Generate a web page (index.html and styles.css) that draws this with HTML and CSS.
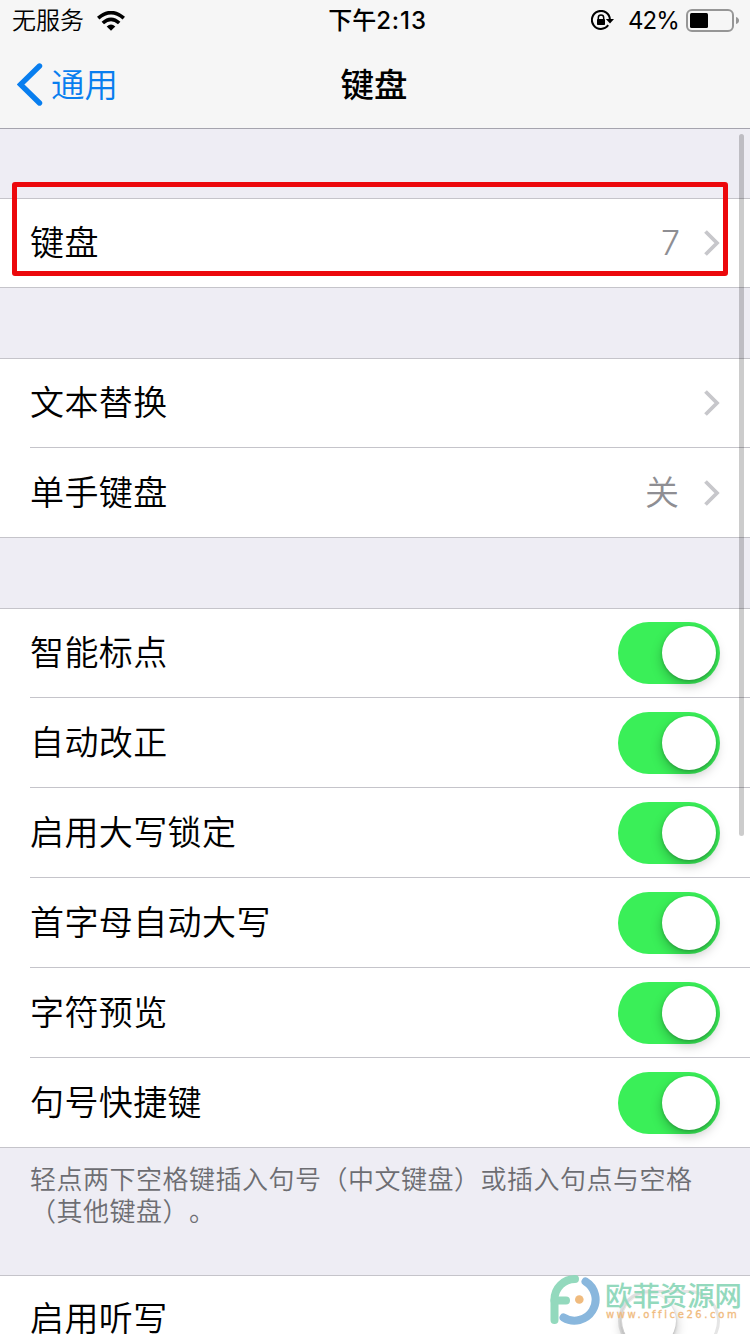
FILE: index.html
```html
<!DOCTYPE html>
<html lang="zh-CN">
<head>
<meta charset="utf-8">
<title>键盘</title>
<link rel="stylesheet" href="styles.css">
</head>
<body>
<div class="screen">
  <header class="header">
    <div class="status">
      <div class="status-left">
        <span>无服务</span>
        <svg class="wifi" width="28" height="20" viewBox="0 0 28 20"><g fill="none" stroke="#000" stroke-width="3.6"><path d="M1.2 7.2Q14-4 26.8 7.2"/><path d="M5.8 12Q14 4.6 22.2 12"/></g><path d="M9.7 15.4Q14 11.6 18.3 15.4L14 19.8Z"/></svg>
      </div>
      <div class="time">下午<span class="clock">2:13</span></div>
      <div class="status-right">
        <svg class="lock" width="23" height="22" viewBox="0 0 23 22"><path d="M17.2 15.2A9 9 0 1 1 18.9 9.500" fill="none" stroke="#000" stroke-width="2"/><path d="M14.800 9H23L19 13.6Z"/><rect x="6" y="8.900" width="8" height="6.2" rx=".8"/><path d="M7.3 9.500V7.7a2.7 2.7 0 0 1 5.4 0V9.500" fill="none" stroke="#000" stroke-width="1.5"/></svg>
        <span class="percent">42%</span>
        <svg class="battery" width="54" height="24" viewBox="0 0 54 24"><rect x="1" y="1" width="46" height="21" rx="5" fill="none" stroke="#969696" stroke-width="2"/><rect x="4" y="4" width="18" height="15" rx="1.5"/><path d="M50 8Q53 9 53 11.5T50 15Z" fill="#969696"/></svg>
      </div>
    </div>
    <nav class="nav">
      <a class="back"><svg width="26" height="43" viewBox="0 0 26 43"><path d="M22.5 3L3.5 21.5L22.5 40" fill="none" stroke="#087eef" stroke-width="5.4" stroke-linecap="round" stroke-linejoin="miter"/></svg><span class="back-text">通用</span></a>
      <h1 class="title">键盘</h1>
    </nav>
  </header>
  <main class="content">
    <section class="group">
      <div class="row"><span class="label">键盘</span><span class="value number">7</span><svg class="chevron" width="16" height="26" viewBox="0 0 16 26"><path d="M1.500 1.500L13 13L1.500 24.500"/></svg></div>
      <div class="highlight"></div>
    </section>
    <section class="group">
      <div class="row"><span class="label">文本替换</span><svg class="chevron" width="16" height="26" viewBox="0 0 16 26"><path d="M1.500 1.500L13 13L1.500 24.500"/></svg></div>
      <div class="row"><span class="label">单手键盘</span><span class="value">关</span><svg class="chevron" width="16" height="26" viewBox="0 0 16 26"><path d="M1.500 1.500L13 13L1.500 24.500"/></svg></div>
    </section>
    <section class="group">
      <div class="row"><span class="label">智能标点</span><span class="switch on"><i class="knob"></i></span></div>
      <div class="row"><span class="label">自动改正</span><span class="switch on"><i class="knob"></i></span></div>
      <div class="row"><span class="label">启用大写锁定</span><span class="switch on"><i class="knob"></i></span></div>
      <div class="row"><span class="label">首字母自动大写</span><span class="switch on"><i class="knob"></i></span></div>
      <div class="row"><span class="label">字符预览</span><span class="switch on"><i class="knob"></i></span></div>
      <div class="row"><span class="label">句号快捷键</span><span class="switch on"><i class="knob"></i></span></div>
    </section>
    <p class="note">轻点两下空格键插入句号（中文键盘）或插入句点与空格<br>（其他键盘）。</p>
    <section class="group last">
      <div class="row"><span class="label">启用听写</span><span class="switch"><i class="knob"></i></span></div>
    </section>
  </main>
  <div class="scrollbar"></div>
  <div class="watermark">
    <svg width="52" height="52" viewBox="0 0 52 52"><g fill="none" stroke-width="8" stroke-linecap="round"><path d="M4.5 46V25.5A20.5 20.5 0 0 1 25 5" stroke="#8ed8ba"/><path d="M4.5 26.5H16" stroke="#8ed8ba"/><path d="M35.500 7.500A20.500 20.500 0 1 1 13.500 43.500" stroke="#83b4dc"/></g><circle cx="29.300" cy="25.500" r="4.300" fill="#f0b878"/></svg>
    <div class="brand"><div class="brand-name">欧菲资源网</div><div class="brand-url">www.office26.com</div></div>
  </div>
</div>
</body>
</html>
```
FILE: styles.css
```css
* { box-sizing: border-box; }
body {
  margin: 0;
  overflow: hidden;
  font-family: Inter, "Noto Sans CJK SC", sans-serif;
  color: #000;
}
.screen {
  position: relative;
  width: 750px;
  height: 1334px;
  overflow: hidden;
  background: #eeedf4;
}
.header {
  height: 129px;
  background: #f6f6f6;
  border-bottom: 1px solid #a5a4ae;
}
.status {
  display: grid;
  grid-template-columns: 1fr auto 1fr;
  align-items: center;
  height: 41px;
  padding: 1px 11px 0 12px;
  font-size: 24px;
  line-height: 40px;
  font-weight: 350;
}
.status-left, .status-right { display: flex; align-items: center; }
.wifi { margin-left: 13px; }
.time { padding-left: 4px; font-weight: 500; }
.clock { letter-spacing: 0.9px; }
.status-right { justify-content: flex-end; margin-right: -1px; }
.lock { margin-right: 14px; }
.percent { margin-right: 7px; font-weight: 400; letter-spacing: -0.9px; }
.nav {
  display: grid;
  grid-template-columns: 1fr auto 1fr;
  align-items: center;
  height: 87px;
  padding: 0 17px;
}
.back {
  display: flex;
  align-items: center;
  gap: 8px;
  color: #087eef;
  font-size: 33.5px;
  font-weight: 350;
}
.back-text { padding-bottom: 4px; }
.title { margin: 0 2px 4px 0; font-size: 33.5px; font-weight: 500; }
.content { padding-top: 69px; }
.group {
  position: relative;
  margin-bottom: 70px;
  background: #fff;
  border-top: 1px solid #c5c4ca;
  border-bottom: 1px solid #c5c4ca;
}
.row {
  display: flex;
  align-items: center;
  height: 90px;
  margin-left: 30px;
  padding-right: 30px;
  border-bottom: 1px solid #c5c4ca;
}
.row:first-child { height: 89px; }
.row:nth-last-child(1), .row:only-of-type { border-bottom: 0; }
.group .row:nth-last-child(1):not(:first-child) { height: 89px; }
.group .row:first-child:nth-last-child(2):has(+ .highlight) { height: 88px; border-bottom: 0; }
.label {
  flex: 1;
  padding-bottom: 5px;
  font-size: 34px;
  font-weight: 350;
  letter-spacing: 0.4px;
}
.value { margin-right: 25px; padding-bottom: 4px; color: #8e8e93; font-size: 34px; font-weight: 350; }
.number { margin-right: 24px; padding-bottom: 2px; }
.chevron { fill: none; stroke: #c7c7cb; stroke-width: 3.8; }
.highlight {
  position: absolute;
  top: -17px;
  left: 12px;
  width: 716px;
  height: 94px;
  border: 5px solid #ec080c;
  border-radius: 3px;
}
.switch {
  display: flex;
  width: 102px;
  height: 62px;
  padding: 4px;
  border-radius: 31px;
  background: #fff;
  box-shadow: inset 0 0 0 3px #e5e5e5;
}
.on {
  justify-content: flex-end;
  background: #3aef58;
  box-shadow: none;
}
.knob {
  width: 54px;
  height: 54px;
  border-radius: 50%;
  background: #fff;
  box-shadow: 0 5px 12px rgba(0, 0, 0, 0.25), 0 1px 3px rgba(0, 0, 0, 0.2);
}
.note {
  height: 127px;
  margin: -70px 0 0;
  padding: 16px 30px 0;
  color: #6d6d72;
  font-size: 26px;
  font-weight: 350;
  line-height: 32px;
  letter-spacing: 0.5px;
  white-space: nowrap;
  text-spacing-trim: space-all;
}
.last { margin-bottom: 0; }
.last .label { padding-bottom: 8px; }
.scrollbar {
  position: absolute;
  top: 134px;
  right: 6px;
  width: 5px;
  height: 702px;
  border-radius: 3px;
  background: rgba(0, 0, 0, 0.2);
}
.watermark {
  position: absolute;
  left: 550px;
  top: 1274px;
  display: flex;
  gap: 3px;
  opacity: 0.95;
}
.brand { padding-top: 7px; }
.brand-name {
  color: #8ed8ba;
  font-size: 27.4px;
  font-weight: 500;
  line-height: 31px;
}
.brand-url {
  padding-left: 1px;
  color: #f0b878;
  font-family: "DejaVu Sans", sans-serif;
  font-size: 10px;
  line-height: 6px;
  letter-spacing: 2.6px;
  -webkit-text-stroke: 0.3px #f0b878;
}
```
